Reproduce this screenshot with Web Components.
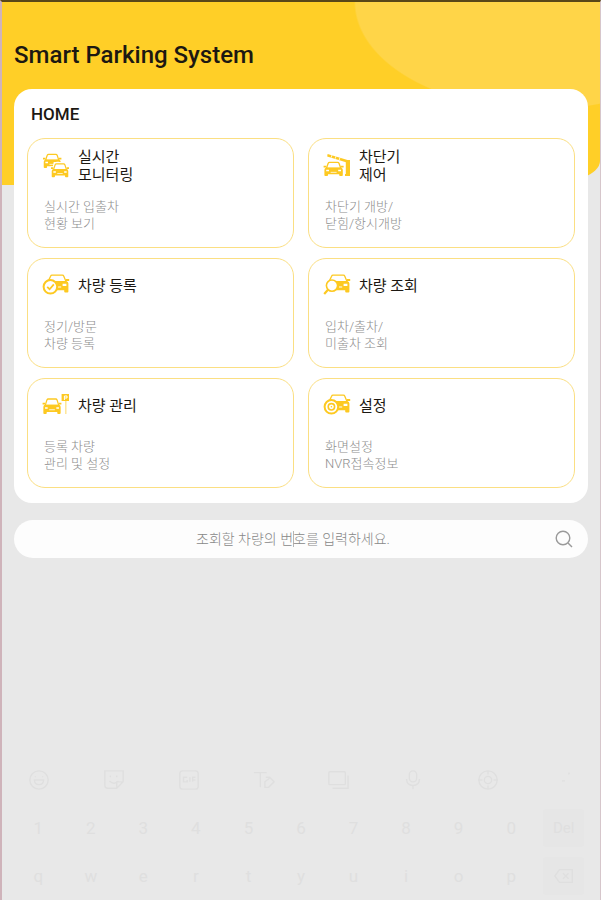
<!DOCTYPE html>
<html lang="ko">
<head>
<meta charset="utf-8">
<meta name="viewport" content="width=device-width, initial-scale=1">
<title>Smart Parking System</title>
<style>
  body {
    margin: 0;
    font-family: Roboto, "Noto Sans CJK KR", sans-serif;
    color: #1c1812;
    background: #e8e8e8;
  }
</style>
</head>
<body>
<parking-app>
  <app-header slot="header">Smart Parking System</app-header>
  <menu-panel heading="HOME">
    <menu-tile icon="monitor" href="#monitor">실시간<br>모니터링<span slot="desc">실시간 입출차<br>현황 보기</span></menu-tile>
    <menu-tile icon="barrier" href="#barrier">차단기<br>제어<span slot="desc">차단기 개방/<br>닫힘/항시개방</span></menu-tile>
    <menu-tile icon="register" href="#register">차량 등록<span slot="desc">정기/방문<br>차량 등록</span></menu-tile>
    <menu-tile icon="lookup" href="#lookup">차량 조회<span slot="desc">입차/출차/<br>미출차 조회</span></menu-tile>
    <menu-tile icon="manage" href="#manage">차량 관리<span slot="desc">등록 차량<br>관리 및 설정</span></menu-tile>
    <menu-tile icon="settings" href="#settings">설정<span slot="desc">화면설정<br>NVR접속정보</span></menu-tile>
  </menu-panel>
  <plate-search placeholder="조회할 차량의 번호를 입력하세요."></plate-search>
  <soft-keyboard slot="keyboard"></soft-keyboard>
</parking-app>

<script>
/* ── Tile icons, 28 x 28 ───────────────────────────────── */
// front view of a car, 20 x 16
const CAR = `
  <path d="M2.8 7.4 4.6 2Q5 1 6 1h8q1 0 1.4 1l1.8 5.4z" fill="#fff" stroke="currentColor" stroke-width="1.3"/>
  <path d="M0 4.8h2.6v1.8H0zM17.4 4.8H20v1.8h-2.6z"/>
  <path d="M2.6 6.8h14.8q1.8.4 1.8 2.2v6q0 .9-.9.9h-1.8q-.9 0-.9-.9v-1H4.4v1q0 .9-.9.9H1.7q-.9 0-.9-.9V9q0-1.8 1.8-2.2z"/>
  <path d="M2.6 9.2h2.8v1.6H2.6zM14.6 9.2h2.8v1.6h-2.8z" fill="#fff"/>
  <path d="M7 11.4h6v.8H7z" fill="#fff"/>`;

// car turned to the right, its left wheel hidden by a round badge
const SIDE_CAR = `
  <path d="M6 9.6 8.6 4.2Q9 3.2 10 3.2h10.4q1 0 1.4 1L24 9.6z" fill="#fff" stroke="currentColor" stroke-width="1.3"/>
  <path d="M24 7h3.2v2H24z"/>
  <path d="M8 9.2h16.4q2 .4 2 2.4v7.8q0 1-1 1h-2.2q-1 0-1-1v-1.2H12z"/>
  <path d="M20.6 11.8h3.8v2.2h-3.8zM16 14.6h3.2v1H16z" fill="#fff"/>`;

const ICONS = {
  monitor: `<g transform="translate(1 1.4) scale(.92)">${CAR}</g>
    <g transform="translate(9 11) scale(.9)"><path d="M3-1h14l2 5h3v8H-1V4h3z" fill="#fff"/>${CAR}</g>`,
  barrier: `<g transform="translate(.6 9.4) scale(1 .92)">${CAR}</g>
    <path d="M4.6 2 27 8.8v2.6L4.2 4.6z"/>
    <path d="m9 3-.8 2.6M13 4.2l-.8 2.6M17 5.4l-.8 2.6" stroke="#fff" stroke-width=".8"/>
    <path d="M22 8h5v16h-5v-2h.8V10H22z"/>`,
  register: `${SIDE_CAR}
    <circle cx="8.4" cy="14.8" r="6.8" fill="#fff" stroke="currentColor" stroke-width="2"/>
    <path d="m5.2 14.8 2.4 2.4 4.2-4.8" fill="none" stroke="currentColor" stroke-width="1.7"/>`,
  lookup: `${SIDE_CAR}
    <circle cx="9" cy="13.6" r="5.6" fill="#fff" stroke="currentColor" stroke-width="1.6"/>
    <path d="m5.2 17.6-4 4.4" stroke="currentColor" stroke-width="2.2"/>`,
  manage: `<g transform="translate(.6 6) scale(.94 1)">${CAR}</g>
    <path d="M19.6 2h7.4v7h-7.4z"/>
    <path d="M22.4 8V4h2.6v2h-2.4" fill="none" stroke="#fff" stroke-width="1"/>
    <path d="M23.8 9v13" stroke="currentColor" stroke-opacity=".5" stroke-width="1.4"/>`,
  settings: `${SIDE_CAR}
    <circle cx="8.4" cy="14.8" r="6.8" fill="#fff" stroke="currentColor" stroke-width="2"/>
    <circle cx="8.4" cy="14.8" r="3.2" fill="none" stroke="currentColor" stroke-width="1.6"/>
    <circle cx="8.4" cy="14.8" r=".8"/>`,
};

/* ── <parking-app> ─────────────────────────────────────── */
class ParkingApp extends HTMLElement {
  constructor() {
    super();
    this.attachShadow({ mode: "open" }).innerHTML = `
      <style>
        :host {
          display: flex;
          flex-direction: column;
          box-sizing: border-box;
          min-height: 100vh;
          border-top: 2px solid #594718;
          border-left: 2px solid #cfb3ba;
          border-right: 1px solid #d6c6cb;
        }
        main {
          display: flex;
          flex-direction: column;
          gap: 17px;
          margin-top: -96px;
          padding: 0 12px;
        }
        footer { margin-top: auto; }
      </style>
      <slot name="header"></slot>
      <main><slot></slot></main>
      <footer><slot name="keyboard"></slot></footer>
    `;
  }
}

/* ── <app-header> ──────────────────────────────────────── */
class AppHeader extends HTMLElement {
  constructor() {
    super();
    this.attachShadow({ mode: "open" }).innerHTML = `
      <style>
        :host {
          display: block;
          padding: 37px 12px 114px;
          border-bottom-right-radius: 60px 24px;
          background:
            radial-gradient(ellipse 186px 108px at calc(100% - 60px) 0, #ffd548 99%, transparent 100%),
            #ffcf27;
        }
        h1 {
          margin: 0;
          font-size: 24px;
          line-height: 32px;
          font-weight: 500;
        }
      </style>
      <h1><slot></slot></h1>
    `;
  }
}

/* ── <menu-panel> ──────────────────────────────────────── */
class MenuPanel extends HTMLElement {
  connectedCallback() {
    this.attachShadow({ mode: "open" }).innerHTML = `
      <style>
        :host {
          display: block;
          padding: 13px 13px 15px;
          border-radius: 18px;
          background: #fff;
        }
        h2 {
          margin: 0 4px 12px;
          font-size: 17px;
          line-height: 24px;
          font-weight: 500;
        }
        .grid {
          display: grid;
          grid-template-columns: 1fr 1fr;
          gap: 10px 14px;
        }
      </style>
      <h2>${this.getAttribute("heading")}</h2>
      <nav class="grid"><slot></slot></nav>
    `;
  }
}

/* ── <menu-tile> ───────────────────────────────────────── */
class MenuTile extends HTMLElement {
  connectedCallback() {
    this.attachShadow({ mode: "open" }).innerHTML = `
      <style>
        :host { display: block; }
        a {
          display: flex;
          flex-direction: column;
          gap: 14px;
          padding: 9px 16px 15px;
          border: 1px solid #fbdf83;
          border-radius: 18px;
          color: inherit;
          text-decoration: none;
        }
        a:hover { background: #fffbea; }
        .top {
          display: flex;
          align-items: center;
          gap: 8px;
          min-height: 36px;
          margin-left: -2px;
        }
        svg { flex-shrink: 0; color: #fdc921; fill: currentColor; }
        .title { font-size: 15px; line-height: 18px; }
        .desc { font-size: 13px; line-height: 17px; color: #8e8e8e; font-weight: 300; }
      </style>
      <a href="${this.getAttribute("href")}">
        <span class="top">
          <svg width="28" height="28" viewBox="0 0 28 28" aria-hidden="true">${ICONS[this.getAttribute("icon")]}</svg>
          <span class="title"><slot></slot></span>
        </span>
        <span class="desc"><slot name="desc"></slot></span>
      </a>
    `;
  }
}

/* ── <plate-search> ────────────────────────────────────── */
class PlateSearch extends HTMLElement {
  connectedCallback() {
    const label = this.getAttribute("placeholder");
    this.attachShadow({ mode: "open" }).innerHTML = `
      <style>
        :host { display: block; }
        form {
          display: flex;
          align-items: center;
          height: 38px;
          padding: 0 14px 0 18px;
          border-radius: 19px;
          background: #fdfdfd;
        }
        input {
          flex: 1;
          min-width: 0;
          padding: 0;
          border: 0;
          outline: 0;
          /* thin caret line in the middle of the field */
          background: linear-gradient(#b5b5b5, #b5b5b5) center / 1px 16px no-repeat;
          font: 300 14px/24px Roboto, "Noto Sans CJK KR", sans-serif;
          text-align: center;
        }
        input::placeholder { color: #888; opacity: 1; }
        button {
          display: flex;
          padding: 0;
          border: 0;
          background: none;
          color: #9a9a9a;
          cursor: pointer;
        }
      </style>
      <form>
        <input type="text" aria-label="${label}" placeholder="${label}">
        <button type="button" aria-label="검색">
          <svg width="20" height="20" viewBox="0 0 20 20" fill="none" stroke="currentColor" stroke-width="1.4"><circle cx="9" cy="9" r="6.8"/><path d="m14 14 4 4"/></svg>
        </button>
      </form>
    `;
  }
}

/* ── <soft-keyboard> ───────────────────────────────────── */
const TOOLS = [
  ["이모티콘", '<circle cx="12" cy="12" r="10"/><path d="M7 12q0 5 5 5t5-5zM8 8v1M16 8v1"/>'],
  ["스티커", '<path d="M2 2h20v12l-7 7H5q-3 0-3-3zM7 13q5 5 10 0M8 7v2M15 7v2M15 21v-7h7"/>'],
  ["움짤", '<rect x="2" y="2" width="20" height="20" rx="3"/><path d="M10 9H6v5h4v-2M13 9v5M16 14V9h3M16 12h3"/>'],
  ["텍스트", '<path d="M1 4h14M8 4v16M14 9h4l5 5-6 6h-4v-6l5-4"/>'],
  ["번역", '<rect x="2" y="3" width="18" height="14" rx="1"/><path d="M6 21h17V7"/>'],
  ["음성", '<rect x="8" y="2" width="8" height="12" rx="4"/><path d="M5 11q0 7 7 7t7-7M12 18v4"/>'],
  ["설정", '<circle cx="12" cy="12" r="10"/><circle cx="12" cy="12" r="4"/><path d="M12 2v4M12 18v4M2 12h4M18 12h4"/>'],
  ["더보기", '<path d="M11 13h3M18 6l1-2"/>'],
];

class SoftKeyboard extends HTMLElement {
  constructor() {
    super();
    this.attachShadow({ mode: "open" });
  }

  connectedCallback() {
    this.shadowRoot.innerHTML = `
      <style>
        :host { display: grid; gap: 10px; padding-bottom: 5px; color: #dfdfdf; }
        .row { display: grid; grid-auto-flow: column; grid-auto-columns: 1fr; }
        .keys { padding: 0 10px; }
        button {
          display: flex;
          align-items: center;
          justify-content: center;
          height: 38px;
          padding: 0;
          border: 0;
          background: none;
          color: inherit;
          font: 17px Roboto, sans-serif;
        }
        .keys button:last-child {
          margin: 0 6px;
          border-radius: 3px;
          background: #e6e6e6;
          font-size: 15px;
        }
        svg { fill: none; stroke: currentColor; stroke-width: 1.5; }
      </style>
      <div class="row">${TOOLS.map(([name, art]) => `<button type="button" aria-label="${name}">${this._svg(art)}</button>`).join("")}</div>
      <div class="row keys">${this._keys("1234567890")}<button type="button">Del</button></div>
      <div class="row keys">${this._keys("qwertyuiop")}<button type="button" aria-label="지우기">${this._svg('<path d="M7 5h14v14H7l-5-7zM11 9l6 6M17 9l-6 6"/>')}</button></div>
    `;
  }

  _svg(art) {
    return `<svg width="22" height="22" viewBox="0 0 24 24">${art}</svg>`;
  }

  _keys(chars) {
    return [...chars].map((c) => `<button type="button">${c}</button>`).join("");
  }
}

customElements.define("parking-app", ParkingApp);
customElements.define("app-header", AppHeader);
customElements.define("menu-panel", MenuPanel);
customElements.define("menu-tile", MenuTile);
customElements.define("plate-search", PlateSearch);
customElements.define("soft-keyboard", SoftKeyboard);
</script>
</body>
</html>
